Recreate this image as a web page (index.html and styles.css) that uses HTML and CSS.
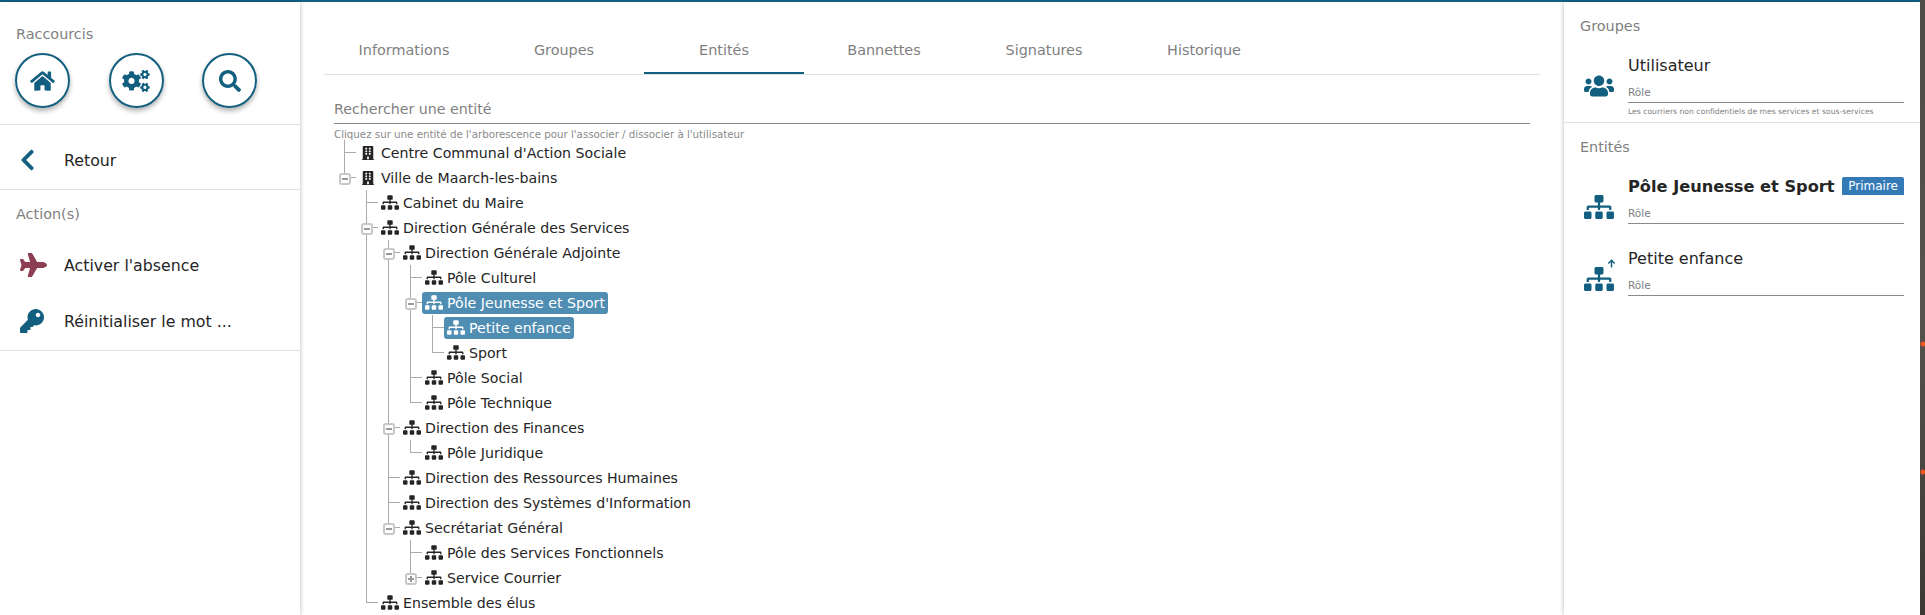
FILE: index.html
```html
<!DOCTYPE html>
<html>
<head>
  <title>Utilisateur</title>
  <link rel="stylesheet" href="styles.css">
</head>
<body>
  <svg class="sprites" width="0" height="0">
    <symbol id="i-sitemap" viewBox="0 0 640 512"><path d="M128 352H32c-17.67 0-32 14.33-32 32v96c0 17.67 14.33 32 32 32h96c17.67 0 32-14.33 32-32v-96c0-17.67-14.33-32-32-32zm-24-80h192v48h48v-48h192v48h48v-57.59c0-21.17-17.23-38.41-38.41-38.41H344v-64h40c17.67 0 32-14.33 32-32V32c0-17.67-14.33-32-32-32H256c-17.67 0-32 14.33-32 32v96c0 17.67 14.33 32 32 32h40v64H94.41C73.23 224 56 241.23 56 262.41V320h48v-48zm264 80h-96c-17.67 0-32 14.33-32 32v96c0 17.67 14.33 32 32 32h96c17.67 0 32-14.33 32-32v-96c0-17.67-14.33-32-32-32zm240 0h-96c-17.67 0-32 14.33-32 32v96c0 17.67 14.33 32 32 32h96c17.67 0 32-14.33 32-32v-96c0-17.67-14.33-32-32-32z"/></symbol>
    <symbol id="i-building" viewBox="0 0 448 512"><path d="M436 480h-20V24c0-13.255-10.745-24-24-24H56C42.745 0 32 10.745 32 24v456H12c-6.627 0-12 5.373-12 12v20h448v-20c0-6.627-5.373-12-12-12zM128 76c0-6.627 5.373-12 12-12h40c6.627 0 12 5.373 12 12v40c0 6.627-5.373 12-12 12h-40c-6.627 0-12-5.373-12-12V76zm0 96c0-6.627 5.373-12 12-12h40c6.627 0 12 5.373 12 12v40c0 6.627-5.373 12-12 12h-40c-6.627 0-12-5.373-12-12v-40zm52 148h-40c-6.627 0-12-5.373-12-12v-40c0-6.627 5.373-12 12-12h40c6.627 0 12 5.373 12 12v40c0 6.627-5.373 12-12 12zm76 160h-64v-84c0-6.627 5.373-12 12-12h40c6.627 0 12 5.373 12 12v84zm64-172c0 6.627-5.373 12-12 12h-40c-6.627 0-12-5.373-12-12v-40c0-6.627 5.373-12 12-12h40c6.627 0 12 5.373 12 12v40zm0-96c0 6.627-5.373 12-12 12h-40c-6.627 0-12-5.373-12-12v-40c0-6.627 5.373-12 12-12h40c6.627 0 12 5.373 12 12v40zm0-96c0 6.627-5.373 12-12 12h-40c-6.627 0-12-5.373-12-12V76c0-6.627 5.373-12 12-12h40c6.627 0 12 5.373 12 12v40z"/></symbol>
    <symbol id="i-home" viewBox="0 0 576 512"><path d="M280.37 148.26L96 300.11V464a16 16 0 0 0 16 16l112.06-.29a16 16 0 0 0 15.92-16V368a16 16 0 0 1 16-16h64a16 16 0 0 1 16 16v95.64a16 16 0 0 0 16 16.05L464 480a16 16 0 0 0 16-16V300L295.67 148.26a12.19 12.19 0 0 0-15.3 0zM571.6 251.47L488 182.56V44.05a12 12 0 0 0-12-12h-56a12 12 0 0 0-12 12v72.61L318.47 43a48 48 0 0 0-61 0L4.34 251.47a12 12 0 0 0-1.6 16.9l25.5 31A12 12 0 0 0 45.15 301l235.22-193.74a12.19 12.19 0 0 1 15.3 0L530.9 301a12 12 0 0 0 16.9-1.6l25.5-31a12 12 0 0 0-1.7-16.93z"/></symbol>
    <symbol id="i-cogs" viewBox="0 0 640 512"><path d="M512.1 191l-8.2 14.3c-3 5.3-9.4 7.5-15.1 5.4-11.8-4.4-22.6-10.7-32.1-18.6-4.6-3.8-5.8-10.5-2.8-15.7l8.2-14.3c-6.9-8-12.3-17.3-15.9-27.4h-16.5c-6 0-11.2-4.3-12.2-10.3-2-12-2.1-24.6 0-37.1 1-6 6.2-10.4 12.2-10.4h16.5c3.6-10.1 9-19.4 15.9-27.4l-8.2-14.3c-3-5.2-1.9-11.9 2.8-15.7 9.5-7.9 20.4-14.2 32.1-18.6 5.7-2.1 12.1.1 15.1 5.4l8.2 14.3c10.5-1.9 21.2-1.9 31.7 0L552 6.3c3-5.3 9.4-7.5 15.1-5.4 11.8 4.4 22.6 10.7 32.1 18.6 4.6 3.8 5.8 10.5 2.8 15.7l-8.2 14.3c6.9 8 12.3 17.3 15.9 27.4h16.5c6 0 11.2 4.3 12.2 10.3 2 12 2.1 24.6 0 37.1-1 6-6.2 10.4-12.2 10.4h-16.5c-3.6 10.1-9 19.4-15.9 27.4l8.2 14.3c3 5.2 1.9 11.9-2.8 15.7-9.5 7.9-20.4 14.2-32.1 18.6-5.7 2.1-12.1-.1-15.1-5.4l-8.2-14.3c-10.4 1.9-21.2 1.9-31.7 0zm-10.5-58.8c38.5 29.6 82.4-14.3 52.8-52.8-38.5-29.7-82.4 14.3-52.8 52.8zM386.3 286.1l33.7 16.8c10.1 5.8 14.5 18.1 10.5 29.1-8.9 24.2-26.4 46.4-42.6 65.8-7.4 8.9-20.2 11.1-30.3 5.3l-29.1-16.8c-16 13.7-34.6 24.6-54.9 31.7v33.6c0 11.6-8.3 21.6-19.7 23.6-24.6 4.2-50.4 4.4-75.9 0-11.5-2-20-11.9-20-23.6V418c-20.3-7.2-38.9-18-54.9-31.7L74 403c-10 5.8-22.9 3.6-30.3-5.3-16.2-19.4-33.3-41.6-42.2-65.7-4-10.9.4-23.2 10.5-29.1l33.3-16.8c-3.9-20.9-3.9-42.4 0-63.4L12 205.8c-10.1-5.8-14.6-18.1-10.5-29 8.9-24.2 26-46.4 42.2-65.8 7.4-8.9 20.2-11.1 30.3-5.3l29.1 16.8c16-13.7 34.6-24.6 54.9-31.7V57.1c0-11.5 8.2-21.5 19.6-23.5 24.6-4.2 50.5-4.4 76-.1 11.5 2 20 11.9 20 23.6v33.6c20.3 7.2 38.9 18 54.9 31.7l29.1-16.8c10-5.8 22.9-3.6 30.3 5.3 16.2 19.4 33.2 41.6 42.1 65.8 4 10.9.1 23.2-10 29.1l-33.7 16.8c3.9 21 3.9 42.5 0 63.5zm-117.6 21.1c59.2-77-28.7-164.9-105.7-105.7-59.2 77 28.7 164.9 105.7 105.7zm243.4 182.7l-8.2 14.3c-3 5.3-9.4 7.5-15.1 5.4-11.8-4.4-22.6-10.7-32.1-18.6-4.6-3.8-5.8-10.5-2.8-15.7l8.2-14.3c-6.9-8-12.3-17.3-15.9-27.4h-16.5c-6 0-11.2-4.3-12.2-10.3-2-12-2.1-24.6 0-37.1 1-6 6.2-10.4 12.2-10.4h16.5c3.6-10.1 9-19.4 15.9-27.4l-8.2-14.3c-3-5.2-1.9-11.9 2.8-15.7 9.5-7.9 20.4-14.2 32.1-18.6 5.7-2.1 12.1.1 15.1 5.4l8.2 14.3c10.5-1.9 21.2-1.9 31.7 0l8.2-14.3c3-5.3 9.4-7.5 15.1-5.4 11.8 4.4 22.6 10.7 32.1 18.6 4.6 3.8 5.8 10.5 2.8 15.7l-8.2 14.3c6.9 8 12.3 17.3 15.9 27.4h16.5c6 0 11.2 4.3 12.2 10.3 2 12 2.1 24.6 0 37.1-1 6-6.2 10.4-12.2 10.4h-16.5c-3.6 10.1-9 19.4-15.9 27.4l8.2 14.3c3 5.2 1.9 11.9-2.8 15.7-9.5 7.9-20.4 14.2-32.1 18.6-5.7 2.1-12.1-.1-15.1-5.4l-8.2-14.3c-10.4 1.9-21.2 1.9-31.7 0zM501.6 431c38.5 29.6 82.4-14.3 52.8-52.8-38.5-29.6-82.4 14.3-52.8 52.8z"/></symbol>
    <symbol id="i-search" viewBox="0 0 512 512"><path d="M505 442.7L405.3 343c-4.5-4.5-10.6-7-17-7H372c27.6-35.3 44-79.7 44-128C416 93.1 322.9 0 208 0S0 93.1 0 208s93.1 208 208 208c48.3 0 92.7-16.4 128-44v16.3c0 6.4 2.5 12.5 7 17l99.7 99.7c9.4 9.4 24.6 9.4 33.9 0l28.3-28.3c9.4-9.4 9.4-24.6.1-34zM208 336c-70.7 0-128-57.2-128-128 0-70.7 57.2-128 128-128 70.7 0 128 57.2 128 128 0 70.7-57.2 128-128 128z"/></symbol>
    <symbol id="i-chevron" viewBox="0 0 320 512"><path d="M34.52 239.03L228.87 44.69c9.37-9.37 24.57-9.37 33.94 0l22.67 22.67c9.36 9.36 9.37 24.52.04 33.9L131.49 256l154.02 154.75c9.34 9.38 9.32 24.54-.04 33.9l-22.67 22.67c-9.37 9.37-24.57 9.37-33.94 0L34.52 272.97c-9.37-9.37-9.37-24.57 0-33.94z"/></symbol>
    <symbol id="i-plane" viewBox="0 0 576 512"><path d="M480 192H365.71L260.61 8.06A16.014 16.014 0 0 0 246.71 0h-65.5c-10.63 0-18.3 10.17-15.38 20.39L214.86 192H112l-43.2-57.6c-3.02-4.03-7.77-6.4-12.8-6.4H16.01C5.6 128-2.04 137.78.49 147.88L32 256 .49 364.12C-2.04 374.22 5.6 384 16.01 384H56c5.04 0 9.78-2.37 12.8-6.4L112 320h102.86l-49.03 171.6c-2.92 10.22 4.75 20.4 15.38 20.4h65.5c5.74 0 11.04-3.08 13.89-8.06L365.71 320H480c35.35 0 96-28.65 96-64s-60.65-64-96-64z"/></symbol>
    <symbol id="i-key" viewBox="0 0 512 512"><path d="M512 176.001C512 273.203 433.202 352 336 352c-11.22 0-22.19-1.062-32.827-3.069l-24.012 27.014A23.999 23.999 0 0 1 261.223 384H224v40c0 13.255-10.745 24-24 24h-40v40c0 13.255-10.745 24-24 24H24c-13.255 0-24-10.745-24-24v-78.059c0-6.365 2.529-12.47 7.029-16.971l161.802-161.802C163.108 213.814 160 195.271 160 176 160 78.798 238.797.001 335.999 0 433.488-.001 512 78.511 512 176.001zM336 128c0 26.51 21.49 48 48 48s48-21.49 48-48-21.49-48-48-48-48 21.49-48 48z"/></symbol>
    <symbol id="i-users" viewBox="0 0 640 512"><path d="M96 224c35.3 0 64-28.7 64-64s-28.7-64-64-64-64 28.7-64 64 28.7 64 64 64zm448 0c35.3 0 64-28.7 64-64s-28.7-64-64-64-64 28.7-64 64 28.7 64 64 64zm32 32h-64c-17.6 0-33.5 7.1-45.1 18.6 40.3 22.1 68.9 62 75.1 109.4h66c17.7 0 32-14.3 32-32v-32c0-35.3-28.7-64-64-64zm-256 0c61.9 0 112-50.1 112-112S381.9 32 320 32 208 82.1 208 144s50.1 112 112 112zm76.8 32h-8.3c-20.8 10-43.9 16-68.5 16s-47.6-6-68.5-16h-8.3C179.6 288 128 339.6 128 403.2V432c0 26.5 21.5 48 48 48h288c26.5 0 48-21.5 48-48v-28.8c0-63.6-51.6-115.2-115.2-115.2zm-223.7-13.4C161.5 263.1 145.6 256 128 256H64c-35.3 0-64 28.7-64 64v32c0 17.7 14.3 32 32 32h65.9c6.3-47.4 34.9-87.3 75.2-109.4z"/></symbol>
  </svg>

  <div class="app">
    <div class="topbar"></div>
    <div class="layout">

      <aside class="left-panel">
        <div class="shortcuts">
          <div class="panel-title">Raccourcis</div>
          <div class="shortcut-list">
            <div class="shortcut"><svg class="home-icon"><use href="#i-home"/></svg></div>
            <div class="shortcut"><svg class="cogs-icon"><use href="#i-cogs"/></svg></div>
            <div class="shortcut"><svg class="search-icon"><use href="#i-search"/></svg></div>
          </div>
        </div>
        <div class="back-row">
          <div class="menu-row">
            <span class="menu-icon"><svg class="chevron-icon"><use href="#i-chevron"/></svg></span>
            <span>Retour</span>
          </div>
        </div>
        <div class="actions">
          <div class="panel-title">Action(s)</div>
          <div class="menu-row">
            <span class="menu-icon plane"><svg class="plane-icon"><use href="#i-plane"/></svg></span>
            <span>Activer l'absence</span>
          </div>
          <div class="menu-row">
            <span class="menu-icon"><svg class="key-icon"><use href="#i-key"/></svg></span>
            <span>Réinitialiser le mot ...</span>
          </div>
        </div>
      </aside>

      <main class="content">
        <div class="tabs">
          <div class="tab">Informations</div>
          <div class="tab">Groupes</div>
          <div class="tab active">Entités</div>
          <div class="tab">Bannettes</div>
          <div class="tab">Signatures</div>
          <div class="tab">Historique</div>
        </div>

        <div class="search-field">Rechercher une entité</div>
        <div class="search-hint">Cliquez sur une entité de l'arborescence pour l'associer / dissocier à l'utilisateur</div>

        <ul class="tree">
          <li><div class="row"><a class="node"><svg class="building"><use href="#i-building"/></svg>Centre Communal d'Action Sociale</a></div></li>
          <li><div class="row"><span class="toggle"></span><a class="node"><svg class="building"><use href="#i-building"/></svg>Ville de Maarch-les-bains</a></div>
            <ul>
              <li><div class="row"><a class="node"><svg class="sitemap"><use href="#i-sitemap"/></svg>Cabinet du Maire</a></div></li>
              <li><div class="row"><span class="toggle"></span><a class="node"><svg class="sitemap"><use href="#i-sitemap"/></svg>Direction Générale des Services</a></div>
                <ul>
                  <li><div class="row"><span class="toggle"></span><a class="node"><svg class="sitemap"><use href="#i-sitemap"/></svg>Direction Générale Adjointe</a></div>
                    <ul>
                      <li><div class="row"><a class="node"><svg class="sitemap"><use href="#i-sitemap"/></svg>Pôle Culturel</a></div></li>
                      <li><div class="row"><span class="toggle"></span><a class="node selected"><svg class="sitemap"><use href="#i-sitemap"/></svg>Pôle Jeunesse et Sport</a></div>
                        <ul>
                          <li><div class="row"><a class="node selected"><svg class="sitemap"><use href="#i-sitemap"/></svg>Petite enfance</a></div></li>
                          <li><div class="row"><a class="node"><svg class="sitemap"><use href="#i-sitemap"/></svg>Sport</a></div></li>
                        </ul>
                      </li>
                      <li><div class="row"><a class="node"><svg class="sitemap"><use href="#i-sitemap"/></svg>Pôle Social</a></div></li>
                      <li><div class="row"><a class="node"><svg class="sitemap"><use href="#i-sitemap"/></svg>Pôle Technique</a></div></li>
                    </ul>
                  </li>
                  <li><div class="row"><span class="toggle"></span><a class="node"><svg class="sitemap"><use href="#i-sitemap"/></svg>Direction des Finances</a></div>
                    <ul>
                      <li><div class="row"><a class="node"><svg class="sitemap"><use href="#i-sitemap"/></svg>Pôle Juridique</a></div></li>
                    </ul>
                  </li>
                  <li><div class="row"><a class="node"><svg class="sitemap"><use href="#i-sitemap"/></svg>Direction des Ressources Humaines</a></div></li>
                  <li><div class="row"><a class="node"><svg class="sitemap"><use href="#i-sitemap"/></svg>Direction des Systèmes d'Information</a></div></li>
                  <li><div class="row"><span class="toggle"></span><a class="node"><svg class="sitemap"><use href="#i-sitemap"/></svg>Secrétariat Général</a></div>
                    <ul>
                      <li><div class="row"><a class="node"><svg class="sitemap"><use href="#i-sitemap"/></svg>Pôle des Services Fonctionnels</a></div></li>
                      <li><div class="row"><span class="toggle closed"></span><a class="node"><svg class="sitemap"><use href="#i-sitemap"/></svg>Service Courrier</a></div></li>
                    </ul>
                  </li>
                </ul>
              </li>
              <li><div class="row"><a class="node"><svg class="sitemap"><use href="#i-sitemap"/></svg>Ensemble des élus</a></div></li>
            </ul>
          </li>
        </ul>
      </main>

      <aside class="right-panel">
        <section class="right-section">
          <div class="panel-title">Groupes</div>
          <div class="assoc first">
            <span class="assoc-icon"><svg><use href="#i-users"/></svg></span>
            <div class="assoc-body">
              <div class="assoc-name">Utilisateur</div>
              <div class="role-field">Rôle</div>
            </div>
          </div>
          <div class="role-hint">Les courriers non confidentiels de mes services et sous-services</div>
        </section>
        <section class="right-section">
          <div class="panel-title">Entités</div>
          <div class="assoc first">
            <span class="assoc-icon"><svg><use href="#i-sitemap"/></svg></span>
            <div class="assoc-body">
              <div class="assoc-name">
                <strong>Pôle Jeunesse et Sport</strong>
                <span class="badge">Primaire</span>
              </div>
              <div class="role-field">Rôle</div>
            </div>
          </div>
          <div class="assoc">
            <span class="assoc-icon">
              <svg><use href="#i-sitemap"/></svg>
              <svg class="arrow-up" viewBox="0 0 10 10"><path d="M5 9.5V1.5M1.5 5L5 1.5L8.5 5"/></svg>
            </span>
            <div class="assoc-body">
              <div class="assoc-name">Petite enfance</div>
              <div class="role-field">Rôle</div>
            </div>
          </div>
        </section>
      </aside>

    </div>
  </div>

  <div class="strip"></div>
</body>
</html>
```

FILE: styles.css
```css
html, body {
  height: 100%;
}

body {
  margin: 0;
  display: flex;
  overflow: hidden;
  background-color: #fff;
  color: #252525;
  font-family: "DejaVu Sans", sans-serif;
  font-size: 14px;
}

.sprites {
  position: absolute;
}

svg {
  display: block;
  fill: currentColor;
}

.app {
  flex: 1;
  display: flex;
  flex-direction: column;
  min-width: 0;
}

.topbar {
  height: 2px;
  background-color: #135f7f;
}

.layout {
  flex: 1;
  display: flex;
  min-height: 0;
}

.strip {
  width: 5px;
  background:
    radial-gradient(circle at 3px 344px, #f0561d 2px, transparent 3px),
    radial-gradient(circle at 3px 472px, #f0561d 2px, transparent 3px),
    linear-gradient(#4f4c45, #55534c 50%, #3a3a33);
}

/* left panel */

.left-panel {
  width: 300px;
  flex-shrink: 0;
  box-shadow: 1px 0 4px rgba(0, 0, 0, 0.2);
}

.panel-title {
  color: #7f7f7f;
  font-size: 14.4px;
  line-height: 20px;
}

.shortcuts {
  padding: 22px 0 15px 16px;
  border-bottom: 1px solid #e0e0e0;
}

.shortcut-list {
  display: flex;
  gap: 38.7px;
  margin-top: 9px;
  margin-left: -1px;
  padding-bottom: 1px;
}

.shortcut {
  width: 51px;
  height: 51px;
  display: flex;
  align-items: center;
  justify-content: center;
  border: 2px solid #135f7f;
  border-radius: 50%;
  color: #135f7f;
  box-shadow: 0 3px 5px rgba(0, 0, 0, 0.3);
}

.home-icon {
  width: 25px;
  height: 22px;
}

.cogs-icon {
  width: 28px;
  height: 22px;
}

.search-icon {
  width: 22px;
  height: 22px;
}

.back-row {
  height: 58px;
  padding-top: 6px;
  border-bottom: 1px solid #e0e0e0;
}

.back-row .menu-row {
  height: 58px;
}

.actions {
  padding-top: 14px;
  padding-bottom: 1px;
  border-bottom: 1px solid #e0e0e0;
}

.actions .panel-title {
  padding-left: 16px;
  margin-bottom: 13px;
}

.menu-row {
  height: 56px;
  display: flex;
  align-items: center;
  padding-left: 20px;
  font-size: 15.8px;
}

.menu-icon {
  width: 44px;
  color: #135f7f;
}

.menu-icon.plane {
  color: #8e3e52;
}

.chevron-icon {
  width: 15px;
  height: 24px;
}

.plane-icon {
  width: 27px;
  height: 24px;
}

.key-icon {
  width: 24px;
  height: 24px;
}

/* center */

.content {
  flex: 1;
  min-width: 0;
  padding: 24px 24px 0;
}

.tabs {
  display: flex;
  height: 48px;
  border-bottom: 1px solid #e0e0e0;
  margin-bottom: 24px;
}

.tab {
  width: 160px;
  height: 44px;
  padding-top: 2px;
  display: flex;
  align-items: center;
  justify-content: center;
  color: #7f7f7f;
  font-size: 14.4px;
  border-bottom: 2px solid transparent;
}

.tab.active {
  border-bottom-color: #135f7f;
}

.search-field {
  margin: 0 10px;
  padding-bottom: 4px;
  font-size: 14.2px;
  line-height: 20px;
  color: #7f7f7f;
  border-bottom: 1px solid #8a8a8a;
}

.search-hint {
  margin: 5px 10px 0;
  font-size: 10.25px;
  line-height: 11px;
  color: #8a8a8a;
}

/* tree */

.tree,
.tree ul {
  list-style: none;
  margin: 0;
  padding: 0;
}

.tree {
  margin-left: 20px;
  font-size: 14.15px;
}

.tree ul {
  margin-left: 22px;
}

.tree li {
  position: relative;
}

/* vertical connector */
.tree li::before {
  content: "";
  position: absolute;
  left: 0;
  top: 0;
  bottom: 0;
  width: 1px;
  background-color: #aaa;
}

.tree li:last-child::before {
  bottom: auto;
  height: 13px;
}

.row {
  position: relative;
  height: 25px;
  display: flex;
  align-items: center;
  padding-left: 12px;
}

/* horizontal connector */
.row::before {
  content: "";
  position: absolute;
  left: 0;
  top: 12px;
  width: 12px;
  height: 1px;
  background-color: #aaa;
}

.toggle {
  position: absolute;
  left: -5px;
  top: 8px;
  width: 8px;
  height: 8px;
  background-color: #fff;
  border: 2px solid #c8c8c8;
  border-radius: 3px;
}

.toggle::before {
  content: "";
  position: absolute;
  left: 1px;
  top: 3px;
  width: 6px;
  height: 2px;
  background-color: #999;
}

.toggle.closed::after {
  content: "";
  position: absolute;
  left: 3px;
  top: 1px;
  width: 2px;
  height: 6px;
  background-color: #999;
}

.node {
  height: 22px;
  display: flex;
  align-items: center;
  gap: 4px;
  padding: 0 3px;
  border-radius: 3px;
  white-space: nowrap;
}

.node.selected {
  background-color: #4f8db3;
  color: #fff;
}

.sitemap {
  width: 18px;
  height: 15px;
}

.building {
  width: 18px;
  height: 14px;
}

/* right panel */

.right-panel {
  width: 356px;
  flex-shrink: 0;
  box-shadow: -1px 0 4px rgba(0, 0, 0, 0.2);
}

.right-section {
  padding: 14px 16px 0;
}

.right-section:first-child {
  height: 106px;
  border-bottom: 1px solid #e0e0e0;
}

.assoc {
  display: flex;
  align-items: flex-end;
  gap: 14px;
  margin-top: 23px;
}

.assoc.first {
  margin-top: 18px;
}

.assoc-icon {
  position: relative;
  width: 30px;
  height: 24px;
  flex-shrink: 0;
  margin-left: 4px;
  margin-bottom: 5px;
  color: #135f7f;
}

.assoc-icon svg {
  width: 30px;
  height: 24px;
}

.assoc-icon .arrow-up {
  position: absolute;
  right: -2px;
  top: -8px;
  width: 9px;
  height: 9px;
  fill: none;
  stroke: currentColor;
  stroke-width: 1.6;
}

.assoc-body {
  flex: 1;
  min-width: 0;
}

.assoc-name {
  display: flex;
  align-items: center;
  justify-content: space-between;
  font-size: 16px;
  line-height: 24px;
  white-space: nowrap;
}

.assoc-name strong {
  font-size: 16.2px;
}

.badge {
  margin-bottom: 2px;
  padding: 0 6px;
  background-color: #337ab7;
  border-radius: 2px 2px 0 0;
  color: #fff;
  font-size: 12px;
  line-height: 18px;
}

.role-field {
  margin-top: 7px;
  padding-bottom: 3px;
  color: #7f7f7f;
  font-size: 10.5px;
  line-height: 14px;
  border-bottom: 1px solid #8a8a8a;
}

.role-hint {
  margin-left: 48px;
  margin-top: 2px;
  color: #7f7f7f;
  font-size: 7.65px;
  line-height: 14px;
  white-space: nowrap;
}
```
